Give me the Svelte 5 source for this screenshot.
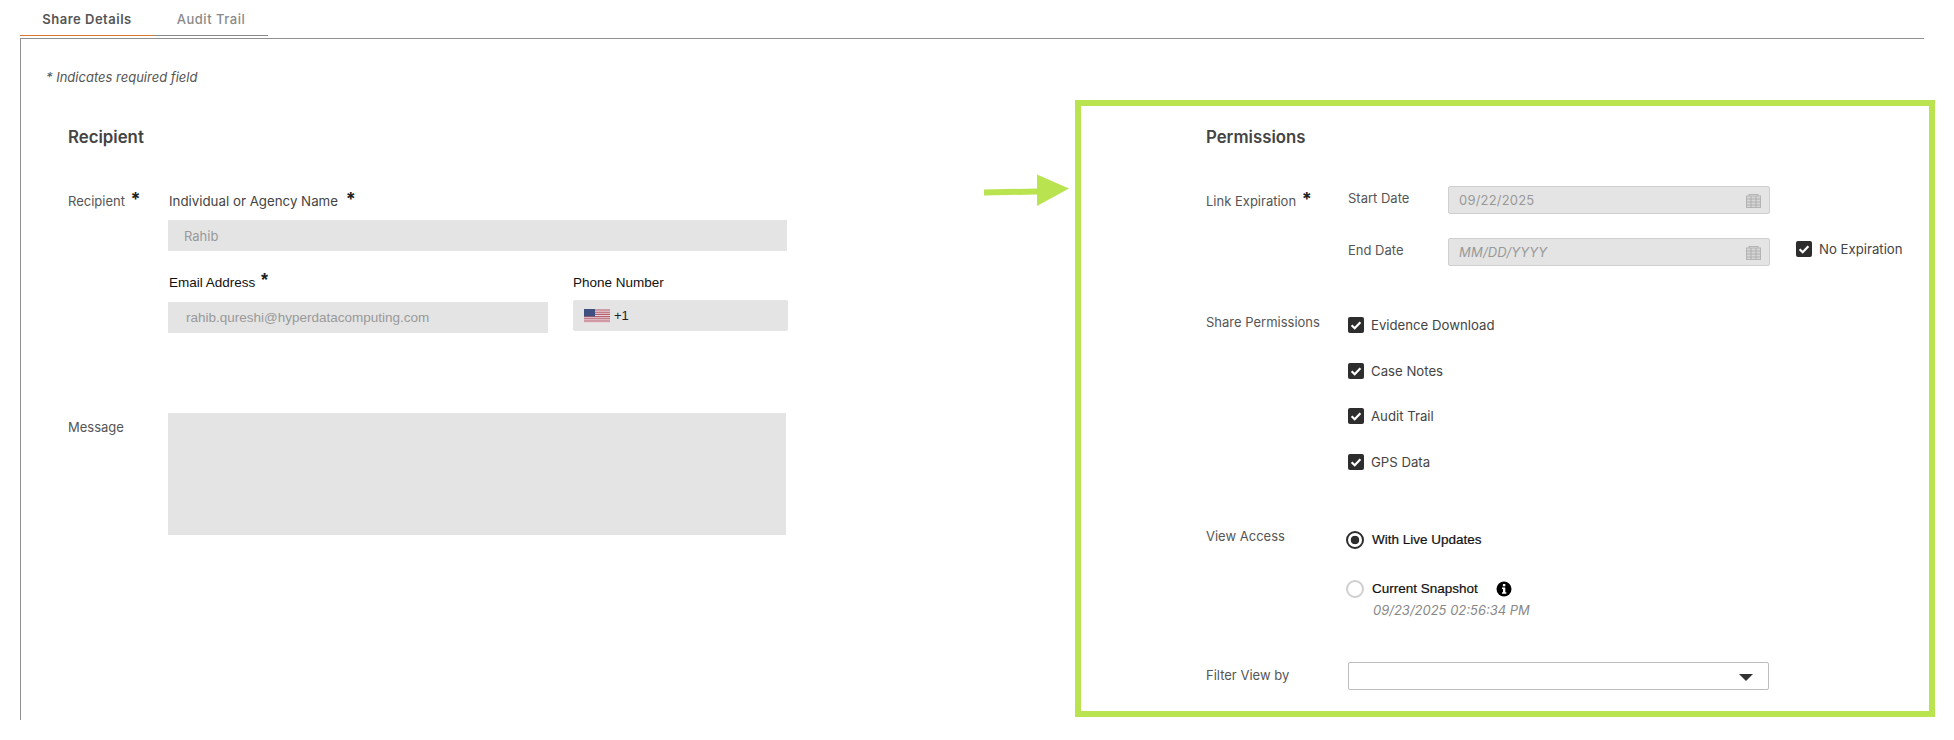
<script>
  const perms = ['Evidence Download', 'Case Notes', 'Audit Trail', 'GPS Data'];
</script>

{#snippet check()}
  <svg class="check" viewBox="0 0 16 16" aria-hidden="true">
    <rect width="16" height="16" rx="2" fill="#2d2d2d" />
    <path d="M3.6 8.2 6.7 11.2 12.4 5.2" fill="none" stroke="#fff" stroke-width="2.2" />
  </svg>
{/snippet}

{#snippet calendar()}
  <svg class="cal" viewBox="0 0 15 15" aria-hidden="true">
    <rect x="0.5" y="3" width="14" height="11.5" fill="#d6d6d6" stroke="#b5b5b5" />
    <path d="M0.5 6H14.5M0.5 9H14.5M0.5 12H14.5M5 3V14.5M10 3V14.5" stroke="#a8a8a8" stroke-width="0.8" />
    <path d="M3 1V3M12 1V3M3 1.6H12" stroke="#b0b0b0" stroke-width="1" />
  </svg>
{/snippet}

<div class="page">
  <nav class="tabs">
    <span class="tab active">Share Details</span>
    <span class="tab">Audit Trail</span>
  </nav>

  <main class="panel">
    <section class="left">
      <p class="note">* Indicates required field</p>
      <div class="inner">
        <h2>Recipient</h2>
        <div class="row recipient">
          <div class="lbl">Recipient <span class="star">*</span></div>
          <div class="fields">
            <div class="lbl dark">Individual or Agency Name <span class="star gap">*</span></div>
            <div class="input name">Rahib</div>
            <div class="pair">
              <div class="email">
                <div class="lbl arial">Email Address <span class="star">*</span></div>
                <div class="input mail">rahib.qureshi@hyperdatacomputing.com</div>
              </div>
              <div class="phone">
                <div class="lbl arial flush">Phone Number</div>
                <div class="input tel">
                  <svg class="flag" viewBox="0 0 26 14" aria-hidden="true">
                    <rect width="26" height="14" fill="#e9d5da" />
                    <path d="M0 1H26M0 3.2H26M0 5.4H26M0 7.6H26M0 9.8H26M0 12H26" stroke="#b5606f" stroke-width="1.1" />
                    <rect width="11" height="7.4" fill="#3f4f80" />
                  </svg>
                  <span>+1</span>
                </div>
              </div>
            </div>
          </div>
        </div>
        <div class="row message">
          <div class="lbl msg">Message</div>
          <div class="textarea"></div>
        </div>
      </div>
    </section>

    <section class="right">
      <h2>Permissions</h2>

      <div class="row expire">
        <div class="lbl pt7">Link Expiration <span class="star">*</span></div>
        <div class="dates">
          <div class="lbl date-l">Start Date</div>
          <div class="date">09/22/2025 {@render calendar()}</div>
          <div></div>
          <div class="lbl date-l">End Date</div>
          <div class="date ph">MM/DD/YYYY {@render calendar()}</div>
          <label class="opt noexp">{@render check()}<span>No Expiration</span></label>
        </div>
      </div>

      <div class="row share">
        <div class="lbl">Share Permissions</div>
        <div class="checks">
          {#each perms as p}
            <label class="opt">{@render check()}<span>{p}</span></label>
          {/each}
        </div>
      </div>

      <div class="row access">
        <div class="lbl">View Access</div>
        <div class="radios">
          <div class="radio-row"><span class="radio on"></span><span class="rlabel">With Live Updates</span></div>
          <div class="radio-row second">
            <span class="radio"></span><span class="rlabel">Current Snapshot</span>
            <svg class="info" viewBox="0 0 16 16" aria-hidden="true">
              <circle cx="8" cy="8" r="7.5" fill="#000" />
              <rect x="6.9" y="3" width="2.4" height="2.3" fill="#fff" />
              <path d="M6 6.6H9.3V11.3H10.3V12.7H6V11.3H7V8H6Z" fill="#fff" />
            </svg>
          </div>
          <div class="stamp">09/23/2025 02:56:34 PM</div>
        </div>
      </div>

      <div class="row filter">
        <div class="lbl pt5">Filter View by</div>
        <div class="select"><span class="caret"></span></div>
      </div>
    </section>

    <svg class="arrow" viewBox="0 0 86 34" aria-hidden="true">
      <path d="M0 15.5 53 14.5V0.5L85 14.5 53 32V20.5L0 21.5Z" fill="#b9e34f" />
    </svg>
  </main>
</div>

<style>
  :global(body) { margin: 0; background: #fff; }
  .page {
    width: 1954px;
    height: 740px;
    overflow: hidden;
    font-family: Inter, "Noto Sans", sans-serif;
    font-size: 13px;
    line-height: 16px;
    color: #555;
  }
  .tabs { display: flex; margin-left: 20px; height: 36px; }
  .tab {
    width: 114px;
    box-sizing: border-box;
    height: 36px;
    padding: 11px 0 0 0;
    text-align: center;
    border-bottom: 1px solid #888;
    color: #8a8a8a;
    font-weight: 500;
    letter-spacing: 0.5px;
    font-size: 13px;
  }
  .tab.active {
    width: 134px;
    color: #555;
    font-weight: 600;
    border-bottom-color: #d9782f;
  }
  .panel {
    position: relative;
    margin: 2px 0 0 20px;
    width: 1904px;
    height: 682px;
    box-sizing: border-box;
    border-top: 1px solid #919191;
    border-left: 1px solid #919191;
    display: grid;
    grid-template-columns: 1054px 860px;
    align-items: start;
  }
  .left { padding-top: 30px; }
  .note {
    margin: 0 0 0 25px;
    font-style: italic;
    font-size: 13px;
    color: #555;
  }
  .inner { padding-left: 47px; margin-top: 42px; }
  h2 {
    margin: 0;
    font-size: 16.8px;
    line-height: 20px;
    font-weight: 600;
    color: #444;
  }
  .row { display: grid; }
  .recipient { grid-template-columns: 100px 620px; margin-top: 46px; }
  .message { grid-template-columns: 100px 618px; margin-top: 80px; }
  .msg { padding-top: 6px; }
  .lbl { white-space: nowrap; }
  .lbl.dark { color: #444; font-size: 13.3px; margin-left: 1px; }
  .arial { font-family: "Liberation Sans", Arial, sans-serif; font-size: 13.5px; color: #111; margin-left: 1px; }
  .arial.flush { margin-left: 0; }
  .star {
    font-size: 18px;
    font-weight: 700;
    color: #222;
    line-height: 0;
    position: relative;
    top: -1px;
    margin-left: 2px;
  }
  .star.gap { margin-left: 4px; }
  .input {
    box-sizing: border-box;
    background: #e4e4e4;
    display: flex;
    align-items: center;
    color: #999;
  }
  .name { width: 619px; height: 31px; margin-top: 11px; padding-left: 16px; }
  .pair { display: flex; gap: 25px; margin-top: 24px; }
  .email { width: 380px; }
  .phone { width: 215px; }
  .mail {
    height: 31px;
    margin-top: 11px;
    padding-left: 18px;
    font-family: "Liberation Sans", Arial, sans-serif;
    font-size: 13.5px;
  }
  .tel {
    height: 31px;
    margin-top: 9px;
    padding-left: 11px;
    gap: 4px;
    border-radius: 2px;
    font-family: "Liberation Sans", Arial, sans-serif;
    font-size: 13px;
    color: #222;
  }
  .flag { width: 26px; height: 14px; flex: none; }
  .textarea { height: 122px; background: #e4e4e4; }

  .right {
    box-sizing: border-box;
    margin-top: 61px;
    width: 860px;
    height: 617px;
    border: 6px solid #b9e34f;
    padding: 21px 0 0 125px;
  }
  .expire, .share, .access, .filter { grid-template-columns: 142px 1fr; }
  .expire { margin-top: 39px; }
  .pt7 { padding-top: 7px; }
  .pt5 { padding-top: 5px; }
  .dates {
    display: grid;
    grid-template-columns: 100px 322px auto;
    grid-template-rows: 28px 28px;
    row-gap: 24px;
    justify-content: start;
  }
  .date-l { padding-top: 4px; }
  .date {
    box-sizing: border-box;
    height: 28px;
    background: #e4e4e4;
    border: 1px solid #cfcfcf;
    border-radius: 2px;
    padding-left: 10px;
    display: flex;
    align-items: center;
    justify-content: space-between;
    color: #999;
    letter-spacing: 0.2px;
  }
  .ph { font-style: italic; }
  .cal { width: 15px; height: 15px; margin-right: 8px; flex: none; }
  .noexp { margin: 3px 0 0 26px; }
  .opt {
    display: flex;
    align-items: center;
    gap: 7px;
    height: 16px;
    color: #444;
    font-size: 13.2px;
    white-space: nowrap;
  }
  .check { width: 16px; height: 16px; flex: none; }
  .share { margin-top: 48px; }
  .checks {
    padding-top: 3px;
    display: flex;
    flex-direction: column;
    gap: 29.6px;
  }
  .access { margin-top: 58px; }
  .radios { padding-top: 3px; }
  .radio-row { display: flex; align-items: center; height: 18px; margin-left: -2px; }
  .radio-row.second { margin-top: 31px; }
  .radio {
    box-sizing: border-box;
    width: 18px;
    height: 18px;
    border-radius: 50%;
    border: 2px solid #cfcfcf;
    background: #fff;
    flex: none;
  }
  .radio.on {
    border-color: #2d2d2d;
    background: radial-gradient(circle, #2d2d2d 0 4px, #fff 4.6px);
  }
  .rlabel {
    margin-left: 8px;
    font-family: "Liberation Sans", Arial, sans-serif;
    font-size: 13.5px;
    color: #111;
    -webkit-text-stroke: 0.2px #111;
  }
  .info { width: 16px; height: 16px; margin-left: 18px; }
  .stamp {
    margin: 4px 0 0 25px;
    font-style: italic;
    color: #888;
  }
  .filter { margin-top: 44px; }
  .select {
    box-sizing: border-box;
    position: relative;
    width: 421px;
    height: 28px;
    border: 1px solid #bdbdbd;
    border-radius: 2px;
    background: #fff;
  }
  .caret {
    position: absolute;
    right: 15px;
    top: 11px;
    width: 0;
    height: 0;
    border-left: 7px solid transparent;
    border-right: 7px solid transparent;
    border-top: 7px solid #333;
  }
  .arrow {
    position: absolute;
    left: 963px;
    top: 135px;
    width: 86px;
    height: 34px;
  }
</style>
